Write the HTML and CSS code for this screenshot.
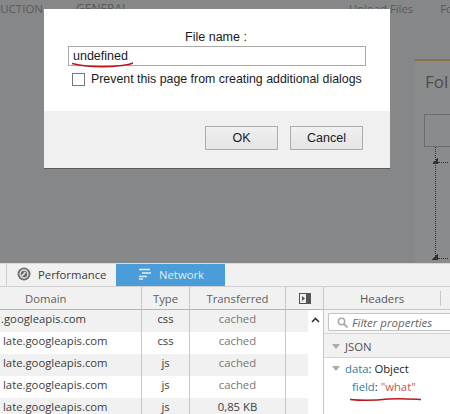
FILE: index.html
```html
<!DOCTYPE html>
<html>
<head>
<meta charset="utf-8">
<title>File name</title>
<link rel="stylesheet" href="styles.css">
</head>
<body>
<div class="page">
  <section class="stage">
    <nav class="bgnav">
      <span class="bgitem">UCTION</span>
      <span class="bgitem bgitem-clipped">GENERAL</span>
      <span class="bgitem bgitem-upload">Upload Files</span>
      <span class="bgitem bgitem-fo">Fo</span>
    </nav>
    <aside class="bgpanel">
      <h2 class="bgtitle">Fol</h2>
      <div class="bgbox"></div>
      <div class="bgruler">
        <span class="tick tick-top"></span>
        <span class="tick tick-bottom"></span>
      </div>
    </aside>
    <div class="dialog">
      <div class="dialog-body">
        <label class="dialog-label">File name :</label>
        <div class="dialog-input">undefined</div>
        <div class="dialog-check">
          <span class="checkbox"></span>
          <span>Prevent this page from creating additional dialogs</span>
        </div>
      </div>
      <div class="dialog-foot">
        <button class="btn">OK</button>
        <button class="btn">Cancel</button>
      </div>
    </div>
  </section>
  <section class="devtools">
    <div class="tabs">
      <div class="tab">
        <svg class="tab-icon" width="14" height="14" viewBox="0 0 14 14"><circle cx="7" cy="7" r="6.500" fill="#6e6e6e"/><circle cx="7" cy="7" r="4" fill="none" stroke="#e8e8e8" stroke-width="1.300"/><path d="M4.500 9.500 8.500 5" stroke="#e8e8e8" stroke-width="1.500"/></svg>
        <span>Performance</span>
      </div>
      <div class="tab tab-active">
        <svg class="tab-icon" width="14" height="12" viewBox="0 0 14 12"><path d="M1 1.500h11M4 5h9M1 8.500h8M1 11h4" stroke="#dff0fb" stroke-width="1.500"/></svg>
        <span>Network</span>
      </div>
    </div>
    <div class="panes">
      <div class="net">
        <div class="row row-head">
          <div class="c c-domain">Domain</div>
          <div class="c c-type">Type</div>
          <div class="c c-size">Transferred</div>
          <div class="c c-tool"><svg width="12" height="11" viewBox="0 0 12 11"><rect width="12" height="11" fill="#555"/><rect x="1" y="1" width="6" height="9" fill="#eee"/><path d="M3 3l3 2.500-3 2.500z" fill="#555"/></svg></div>
        </div>
        <div class="row row-odd"><div class="c c-domain c-first">.googleapis.com</div><div class="c c-type">css</div><div class="c c-size muted">cached</div><div class="c c-fill"></div><div class="c c-scroll"><svg width="9" height="6" viewBox="0 0 9 6"><path d="M1 5 4.500 1.500 8 5" fill="none" stroke="#333" stroke-width="1.600"/></svg></div></div>
        <div class="row"><div class="c c-domain">late.googleapis.com</div><div class="c c-type">css</div><div class="c c-size muted">cached</div><div class="c c-fill"></div><div class="c c-scroll"></div></div>
        <div class="row row-odd"><div class="c c-domain">late.googleapis.com</div><div class="c c-type">js</div><div class="c c-size muted">cached</div><div class="c c-fill"></div><div class="c c-scroll"></div></div>
        <div class="row"><div class="c c-domain">late.googleapis.com</div><div class="c c-type">js</div><div class="c c-size muted">cached</div><div class="c c-fill"></div><div class="c c-scroll"></div></div>
        <div class="row row-odd"><div class="c c-domain">late.googleapis.com</div><div class="c c-type">js</div><div class="c c-size">0,85 KB</div><div class="c c-fill"></div><div class="c c-scroll"></div></div>
      </div>
      <div class="side">
        <div class="side-head"><span class="side-tab">Headers</span></div>
        <div class="filter">
          <div class="filter-box">
            <svg width="11" height="11" viewBox="0 0 11 11"><circle cx="4.500" cy="4.500" r="3.200" fill="none" stroke="#aaa" stroke-width="1.500"/><path d="M7 7l3.500 3.500" stroke="#aaa" stroke-width="1.800"/></svg>
            <span>Filter properties</span>
          </div>
        </div>
        <div class="json-head"><span class="tri"></span>JSON</div>
        <div class="json-body">
          <div class="json-line"><span class="tri"></span><span class="key">data</span>: Object</div>
          <div class="json-line json-child"><span class="key">field</span>: <span class="str">"what"</span></div>
        </div>
      </div>
    </div>
  </section>
  <svg class="ink" width="450" height="414" viewBox="0 0 450 414">
    <path d="M72 63.500C85 66.500 105 67.500 122 65.500 127 65 131 64 133 63" fill="none" stroke="#c0141c" stroke-width="1.400"/>
    <path d="M350 399.500C365 401 376 400.500 388 399 400 398 412 399 421 399.500" fill="none" stroke="#c0141c" stroke-width="1.500"/>
  </svg>
</div>
</body>
</html>
```
FILE: styles.css
```css
* { box-sizing: border-box; }
html, body { margin: 0; padding: 0; }
body { width: 450px; height: 414px; overflow: hidden; background: #fff; }
.page { position: relative; width: 450px; height: 414px; display: flex; flex-direction: column; overflow: hidden; }

/* dimmed page behind the dialog */
.stage { position: relative; height: 263px; flex: none; background: #868788; overflow: hidden; }
.bgnav { height: 18px; display: flex; padding-top: 1px; font: 12px "Open Sans", sans-serif; color: #58595a; }
.bgitem { display: block; flex: none; line-height: 16px; white-space: nowrap; }
.bgitem:first-child { width: 43px; font-size: 11.500px; text-align: right; }
.bgitem-clipped { margin: 0 0 0 33px; width: 52px; }
.bgitem-upload { margin-left: 221px; font-size: 11.300px; }
.bgitem-fo { margin-left: 27px; font-size: 11.300px; }
.bgpanel { position: absolute; left: 415px; top: 59px; width: 35px; height: 204px; background: #8a8b8c; border-top: 2px solid #8f6f42; padding: 9px 0 0 10px; }
.bgtitle { margin: 0; font: 400 17px/24px "Open Sans", sans-serif; color: #4a4b4c; }
.bgbox { width: 40px; height: 33px; margin: 20px 0 0 -1px; border: 1px solid #6b6c6d; }
.bgruler { position: relative; width: 0; height: 109px; margin-left: 10px; border-left: 1px dotted #333; }
.tick { position: absolute; left: -4px; width: 6px; height: 6px; background: linear-gradient(135deg, transparent 50%, #333 50%); }
.tick::after { content: ""; position: absolute; left: 6px; top: 4px; width: 10px; border-top: 1px dotted #333; }
.tick-top { top: 11px; }
.tick-bottom { top: 107px; }

/* dialog */
.dialog { position: absolute; left: 44px; top: 9px; width: 346px; height: 160px; background: #f0f0f0; border-bottom: 1px solid #5c5c5c; display: flex; flex-direction: column; font-family: "Liberation Sans", Arial, sans-serif; color: #1a1a1a; }
.dialog-body { height: 102px; background: #fff; padding: 21px 24px 0; }
.dialog-label { display: block; height: 16px; padding-right: 2px; font-size: 12.500px; line-height: 15px; text-align: center; }
.dialog-input { width: 298px; height: 20px; border: 1px solid #a9a9a9; padding-left: 4px; font-size: 12.500px; line-height: 18px; }
.dialog-check { display: flex; align-items: center; gap: 6px; margin: 6px 0 0 4px; font-size: 12.360px; line-height: 14px; }
.checkbox { width: 13px; height: 13px; border: 1px solid #777; background: #fff; flex: none; }
.dialog-foot { display: flex; justify-content: flex-end; gap: 12px; padding: 15px 27px 0 0; }
.btn { width: 73px; height: 24px; padding: 0; border: 1px solid #acacac; background: linear-gradient(#f0f0f0, #e4e4e4); font: 12.500px "Liberation Sans", Arial, sans-serif; color: #1a1a1a; }

/* developer tools */
.devtools { flex: 1; background: #f1f1f2; font: 11.300px "Open Sans", sans-serif; color: #3c3c3c; display: flex; flex-direction: column; }
.tabs { height: 24px; flex: none; display: flex; padding-left: 6px; background: #f1f1f2; border-bottom: 1px solid #d0d0d0; border-top: 1px solid #d8d8d8; }
.tab { width: 110px; display: flex; align-items: center; gap: 7px; padding: 0 0 2px 10px; border-left: 1px solid #d0d0d0; }
.tab-active { width: 109px; padding-left: 22px; gap: 7px; border: 0; background: #4b9dd9; color: #dff0fb; }
.tab-icon { flex: none; }
.panes { flex: 1; display: flex; min-height: 0; }
.net { width: 324px; flex: none; border-right: 1px solid #c8c8c8; }
.row { height: 22px; display: flex; background: #fff; }
.row-odd { background: #f1f1f2; }
.row-head { height: 23px; background: #f1f1f2; border-bottom: 1px solid #b5b5b5; color: #606060; }
.c { border-right: 1px solid #c8c8c8; line-height: 18px; white-space: nowrap; overflow: hidden; }
.row-head .c { line-height: 24px; }
.c-domain { width: 142px; flex: none; padding-left: 3px; }
.c-first { padding-left: 1px; }
.row-head .c-domain { padding-left: 25px; }
.c-type { width: 48px; flex: none; text-align: center; }
.c-size { width: 96px; flex: none; text-align: center; }
.muted { color: #777; }
.c-tool { width: 37px; flex: none; border-right: 0; display: flex; align-items: center; justify-content: center; }
.c-fill { width: 22px; flex: none; border-right: 0; }
.c-scroll { width: 15px; flex: none; border-right: 0; background: #fff; display: flex; align-items: center; justify-content: center; padding-bottom: 2px; }
.side { flex: 1; background: #fff; min-width: 0; }
.side-head { height: 23px; background: #f1f1f2; border-bottom: 1px solid #c8c8c8; padding: 4px 0 0 36px; color: #555; }
.side-tab { display: inline-block; padding-right: 36px; border-right: 1px solid #c8c8c8; height: 15px; line-height: 15px; }
.filter { height: 24px; padding: 3px 0 0 4px; background: #f4f4f4; border-bottom: 1px solid #d5d5d5; }
.filter-box { display: flex; align-items: center; gap: 4px; height: 18px; padding-left: 8px; width: 130px; background: #fff; border: 1px solid #c4c4c4; border-right: 0; border-radius: 2px 0 0 2px; font-style: italic; color: #666; font-size: 11.500px; white-space: nowrap; }
.json-head { height: 24px; display: flex; align-items: center; background: #f1f1f2; border-bottom: 1px solid #d5d5d5; padding: 2px 0 0 8px; color: #555; }
.tri { width: 0; height: 0; border: 4px solid transparent; border-top: 5px solid #aaa; border-bottom: 0; margin-right: 5px; display: inline-block; }
.json-body { padding-top: 2px; }
.json-line { height: 18px; line-height: 18px; padding-left: 8px; display: block; color: #222; }
.json-line .tri { vertical-align: 2px; }
.json-child { padding-left: 28px; }
.key { color: #2a7ea6; }
.str { color: #d2553b; }

/* hand-drawn red marks over the screenshot */
.ink { position: absolute; left: 0; top: 0; pointer-events: none; }
```
